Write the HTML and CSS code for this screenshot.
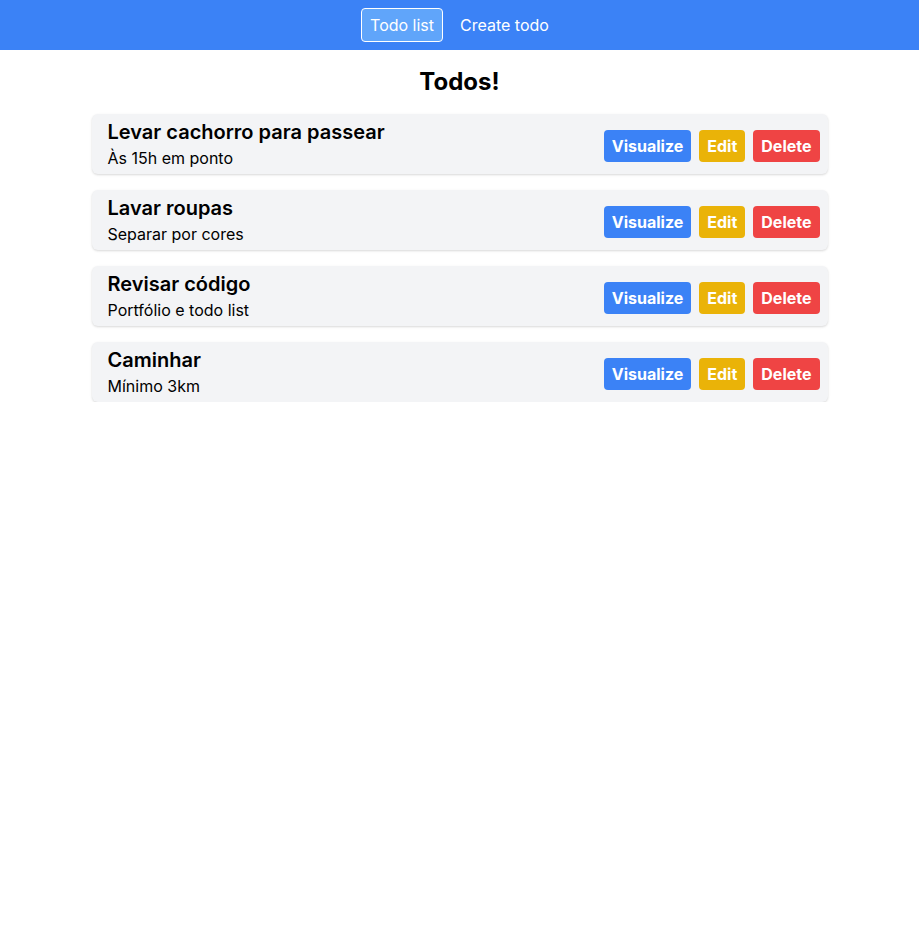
FILE: index.html
```html
<!DOCTYPE html>
<html lang="pt">
<head>
<meta charset="utf-8">
<title>Todos</title>
<link rel="stylesheet" href="styles.css">
</head>
<body>
<nav class="nav">
  <a class="nav-link active" href="#">Todo list</a>
  <a class="nav-link" href="#">Create todo</a>
</nav>
<main class="container">
  <h1 class="title">Todos!</h1>
  <ul class="list">
    <li class="card">
      <div class="info"><div class="card-title">Levar cachorro para passear</div><div class="card-desc">Às 15h em ponto</div></div>
      <div class="actions"><button class="btn blue">Visualize</button><button class="btn yellow">Edit</button><button class="btn red">Delete</button></div>
    </li>
    <li class="card">
      <div class="info"><div class="card-title">Lavar roupas</div><div class="card-desc">Separar por cores</div></div>
      <div class="actions"><button class="btn blue">Visualize</button><button class="btn yellow">Edit</button><button class="btn red">Delete</button></div>
    </li>
    <li class="card">
      <div class="info"><div class="card-title">Revisar código</div><div class="card-desc">Portfólio e todo list</div></div>
      <div class="actions"><button class="btn blue">Visualize</button><button class="btn yellow">Edit</button><button class="btn red">Delete</button></div>
    </li>
    <li class="card">
      <div class="info"><div class="card-title">Caminhar</div><div class="card-desc">Mínimo 3km</div></div>
      <div class="actions"><button class="btn blue">Visualize</button><button class="btn yellow">Edit</button><button class="btn red">Delete</button></div>
    </li>
  </ul>
</main>
</body>
</html>
```
FILE: styles.css
```css
* { box-sizing: border-box; }
body {
  margin: 0;
  font-family: Inter, "Noto Sans", sans-serif;
  color: #000;
  background: #fff;
}
.nav {
  background: #3b82f6;
  height: 50px;
  display: flex;
  justify-content: center;
  align-items: center;
  gap: 8px;
}
.nav-link {
  color: #fff;
  text-decoration: none;
  font-size: 16px;
  line-height: 24px;
  padding: 4px 8px;
  border: 1px solid transparent;
  border-radius: 4px;
}
.nav-link.active {
  background: #60a5fa;
  border-color: #fff;
}
.container {
  max-width: 768px;
  margin: 0 auto;
  padding: 0 16px;
}
.title {
  margin: 16px 0;
  font-size: 24px;
  line-height: 32px;
  font-weight: 700;
  text-align: center;
}
.list {
  list-style: none;
  margin: 0;
  padding: 0;
  display: flex;
  flex-direction: column;
  gap: 16px;
}
.card {
  background: #f3f4f6;
  border-radius: 6px;
  box-shadow: 0 1px 3px rgba(0,0,0,0.1), 0 1px 2px rgba(0,0,0,0.06);
  padding: 4px 8px 4px 16px;
  display: flex;
  align-items: center;
  justify-content: space-between;
}
.card-title {
  font-size: 20px;
  line-height: 28px;
  font-weight: 600;
}
.card-desc {
  font-size: 16px;
  line-height: 24px;
}
.actions {
  display: flex;
  gap: 8px;
  margin-top: 4px;
}
.btn {
  font-family: inherit;
  font-size: 16px;
  line-height: 24px;
  font-weight: 700;
  color: #fff;
  border: none;
  border-radius: 4px;
  padding: 4px 8px;
  cursor: pointer;
}
.blue { background: #3b82f6; }
.yellow { background: #eab308; }
.red { background: #ef4444; }
```
